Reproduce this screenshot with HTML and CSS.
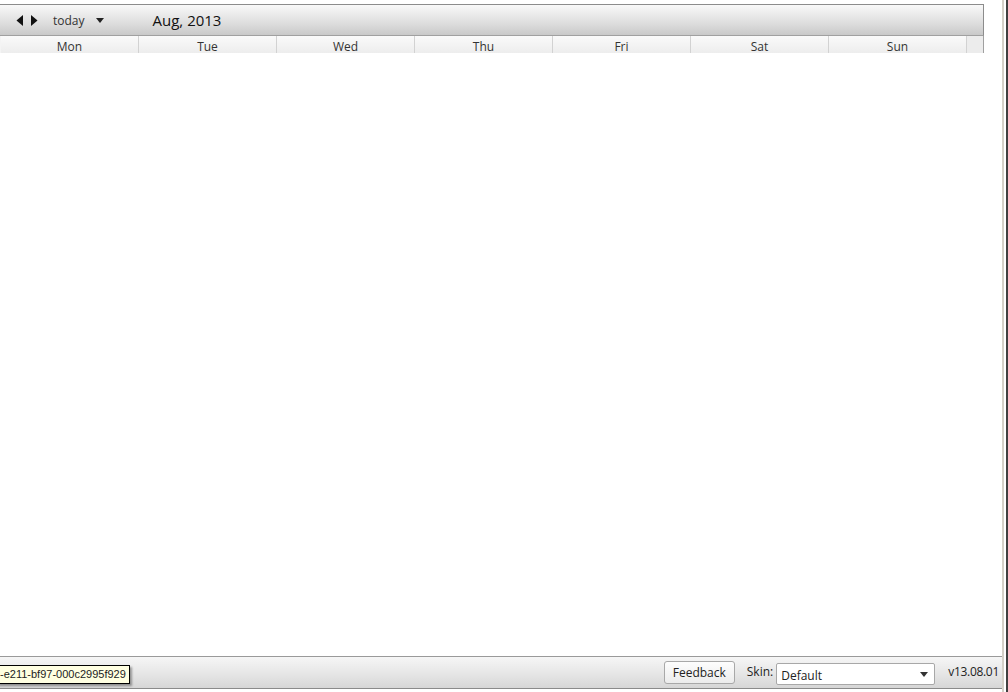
FILE: index.html
```html
<!DOCTYPE html>
<html lang="en">
<head>
    <meta charset="UTF-8">
    <title>Calendar</title>
    <link rel="stylesheet" href="styles.css">
</head>
<body>
    <div class="frame">
        <div class="app">
            <div class="calendar">
                <div class="toolbar">
                    <div class="arrows">
                        <svg width="7" height="11" viewBox="0 0 7 11"><path d="M7 0 L7 11 L0.5 5.5 Z" fill="#111"/></svg>
                        <svg width="7" height="11" viewBox="0 0 7 11"><path d="M0 0 L0 11 L6.5 5.5 Z" fill="#111"/></svg>
                    </div>
                    <span class="today">today</span>
                    <svg class="caret" width="8" height="5" viewBox="0 0 8 5"><path d="M0 0 L8 0 L4 5 Z" fill="#222"/></svg>
                    <span class="title">Aug, 2013</span>
                </div>
                <div class="days">
                    <div class="day">Mon</div>
                    <div class="day">Tue</div>
                    <div class="day">Wed</div>
                    <div class="day">Thu</div>
                    <div class="day">Fri</div>
                    <div class="day">Sat</div>
                    <div class="day">Sun</div>
                    <div class="gutter"></div>
                </div>
            </div>
            <div class="body"></div>
            <div class="statusbar">
                <div class="tooltip">-e211-bf97-000c2995f929</div>
                <button class="feedback">Feedback</button>
                <span class="skin-label">Skin:</span>
                <div class="select">
                    <span>Default</span>
                    <svg width="8" height="5" viewBox="0 0 8 5"><path d="M0 0 L8 0 L4 5 Z" fill="#333"/></svg>
                </div>
                <span class="version">v13.08.01</span>
            </div>
        </div>
    </div>
</body>
</html>
```

FILE: styles.css
```css
body {
    margin: 0;
    background: #fff;
    font-family: "Open Sans", "Noto Sans", sans-serif;
    color: #222;
}

.frame {
    width: 1006px;
    height: 692px;
    border-right: 2px solid #404040;
}

.app {
    width: 1004px;
    height: 692px;
    border-right: 2px solid #d4d0c8;
    box-sizing: border-box;
    display: flex;
    flex-direction: column;
    position: relative;
}

.calendar {
    width: 984px;
    padding-top: 4px;
}

.toolbar {
    height: 30px;
    border-top: 1px solid #8c8c8c;
    border-right: 1px solid #8c8c8c;
    border-bottom: 1px solid #a0a0a0;
    background: linear-gradient(#f9f9f9, #dedede 60%, #c9c9c9);
    display: flex;
    align-items: center;
    font-size: 12px;
}

.arrows {
    display: flex;
    gap: 8px;
    margin-left: 16px;
}

.today {
    margin-left: 15px;
    margin-top: 1px;
    color: #333;
}

.caret {
    margin-left: 11px;
}

.title {
    margin-left: 49px;
    font-size: 15px;
    color: #111;
}

.days {
    display: flex;
    height: 17px;
    border-left: 1px solid #f4f4f4;
    border-right: 1px solid #a0a0a0;
    background: linear-gradient(#fafafa, #ededed);
}

.day {
    width: 137px;
    border-right: 1px solid #d2d2d2;
    text-align: center;
    font-size: 12px;
    line-height: 22px;
    height: 17px;
    overflow: hidden;
    color: #333;
}

.gutter {
    flex: 1;
    background: #ececec;
}

.body {
    flex: 1;
}

.statusbar {
    height: 31px;
    border-top: 1px solid #9a9a9a;
    border-bottom: 1px solid #8a8a8a;
    margin-bottom: 3px;
    background: linear-gradient(#f6f6f6, #e4e4e4 60%, #d6d6d6);
    display: flex;
    align-items: center;
    justify-content: flex-end;
    font-size: 12px;
    position: relative;
}

.tooltip {
    position: absolute;
    left: -3px;
    top: 8px;
    background: #ffffe1;
    border: 1px solid #000;
    font-family: "Liberation Sans", Arial, sans-serif;
    font-size: 11px;
    line-height: 17px;
    padding: 0 3px 0 2px;
    box-shadow: 2px 2px 2px rgba(0, 0, 0, 0.35);
}

.feedback {
    font-family: inherit;
    font-size: 12px;
    color: #222;
    height: 23px;
    width: 71px;
    padding: 0;
    border: 1px solid #a8a8a8;
    border-radius: 3px;
    background: linear-gradient(#fdfdfd, #ececec);
    margin-right: 12px;
}

.skin-label {
    margin-right: 3px;
    margin-top: -3px;
}

.select {
    width: 159px;
    height: 22px;
    border: 1px solid #a8a8a8;
    border-radius: 2px;
    background: #fff;
    display: flex;
    align-items: center;
    justify-content: space-between;
    padding: 0 6px 0 4px;
    box-sizing: border-box;
    margin-top: 3px;
}

.select span {
    margin-top: 2px;
}

.version {
    margin-left: 13px;
    margin-right: 3px;
    margin-top: -2px;
    letter-spacing: -0.3px;
}
```
